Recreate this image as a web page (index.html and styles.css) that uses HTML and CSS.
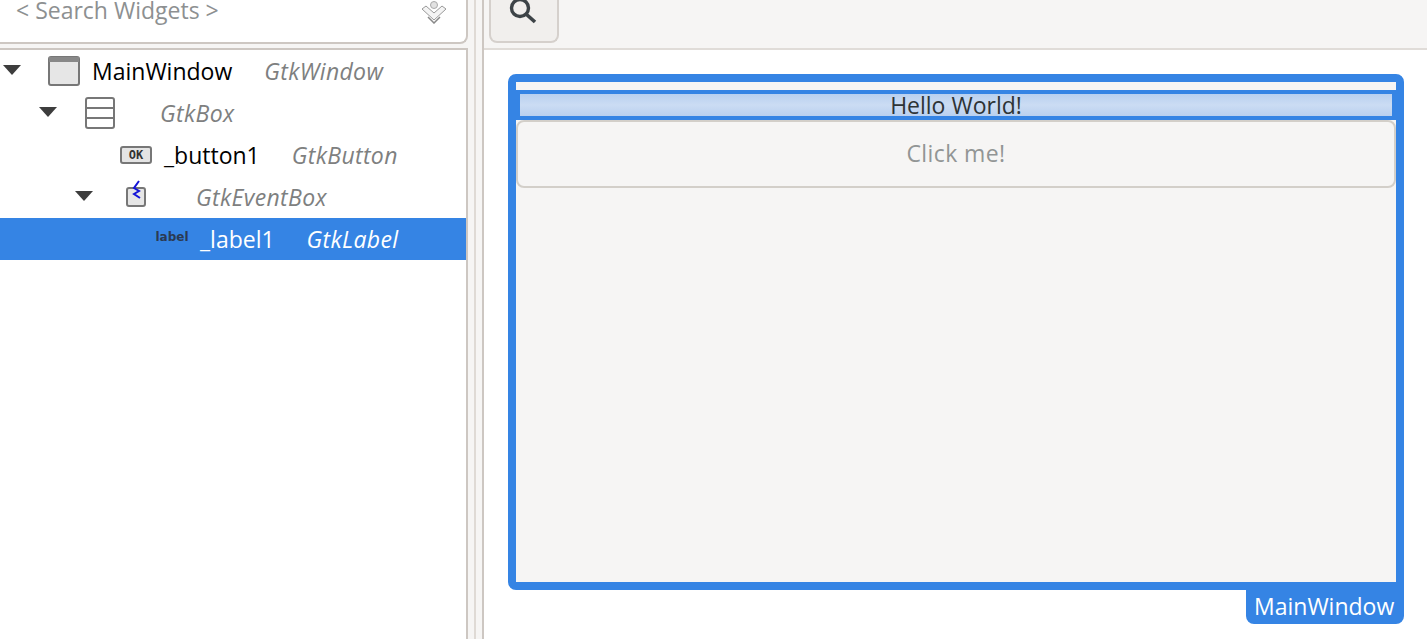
FILE: index.html
```html
<!DOCTYPE html>
<html lang="en">
<head>
   <meta charset="UTF-8">
   <meta name="viewport" content="width=device-width, initial-scale=1.0">
   <title>Glade</title>
   <link rel="stylesheet" href="styles.css">
</head>
<body>
    <div class="app">
        <!-- Widget tree -->
        <aside class="sidebar">
            <div class="search-entry">
                <span class="search-text">&lt; Search Widgets &gt;</span>
                <svg class="search-icon" width="28" height="24" viewBox="0 0 28 24">
                    <circle cx="14" cy="5" r="3.5" fill="#e2e2e2" stroke="#aaa"/>
                    <path d="M2 9 L14 20 L26 9 L22 6 L14 13 L6 6 Z" fill="#f4f4f4" stroke="#999"/>
                    <path d="M8 17 L14 23 L20 17" fill="none" stroke="#888" stroke-width="1.5"/>
                </svg>
            </div>
            <ul class="tree">
                <li class="row level-0">
                    <span class="arrow"></span>
                    <span class="icon">
                        <svg width="32" height="30" viewBox="0 0 32 30">
                            <rect x="1" y="1" width="30" height="28" rx="2" fill="#e6e6e6" stroke="#777" stroke-width="2"/>
                            <rect x="1" y="1" width="30" height="5" fill="#888"/>
                        </svg>
                    </span>
                    <span class="name">MainWindow</span>
                    <span class="type">GtkWindow</span>
                </li>
                <li class="row level-1">
                    <span class="arrow"></span>
                    <span class="icon">
                        <svg width="30" height="32" viewBox="0 0 30 32">
                            <rect x="1" y="1" width="28" height="30" rx="2" fill="#fff" stroke="#777" stroke-width="2"/>
                            <path d="M1 11 H29 M1 21 H29" stroke="#777" stroke-width="2"/>
                        </svg>
                    </span>
                    <span class="name"></span>
                    <span class="type">GtkBox</span>
                </li>
                <li class="row level-2">
                    <span class="arrow-space"></span>
                    <span class="icon">
                        <span class="ok-icon">OK</span>
                    </span>
                    <span class="name">_button1</span>
                    <span class="type">GtkButton</span>
                </li>
                <li class="row level-2">
                    <span class="arrow"></span>
                    <span class="icon">
                        <svg class="event-icon" width="24" height="28" viewBox="0 0 24 28">
                            <rect x="3" y="8" width="18" height="18" rx="2" fill="#e6e6e6" stroke="#777" stroke-width="2"/>
                            <path d="M15 1 L10 8 L15 11 L10 14 L16 18" fill="none" stroke="#1414d8" stroke-width="2"/>
                        </svg>
                    </span>
                    <span class="name"></span>
                    <span class="type">GtkEventBox</span>
                </li>
                <li class="row level-3 selected">
                    <span class="arrow-space"></span>
                    <span class="icon">
                        <span class="label-icon">label</span>
                    </span>
                    <span class="name">_label1</span>
                    <span class="type">GtkLabel</span>
                </li>
            </ul>
        </aside>

        <div class="divider"></div>

        <!-- Design area -->
        <main class="workspace">
            <div class="toolbar">
                <button class="tool-button">
                    <svg width="32" height="32" viewBox="0 0 32 32">
                        <circle cx="14" cy="12" r="8.5" fill="none" stroke="#3d4347" stroke-width="3.4"/>
                        <path d="M20 18 L29 26" stroke="#3d4347" stroke-width="3.6"/>
                    </svg>
                </button>
            </div>
            <div class="canvas">
                <div class="window-frame">
                    <div class="window">
                        <div class="window-top"></div>
                        <div class="label-selected">
                            <div class="label-widget">Hello World!</div>
                        </div>
                        <div class="click-button">Click me!</div>
                    </div>
                    <div class="window-tag">MainWindow</div>
                </div>
            </div>
        </main>
    </div>
</body>
</html>
```

FILE: styles.css
```css
* {
    margin: 0;
    padding: 0;
    box-sizing: border-box;
}

body {
    font-family: "Open Sans", "Noto Sans", sans-serif;
    font-size: 23px;
    background-color: #f6f5f4;
    overflow: hidden;
}

.app {
    display: flex;
    height: 639px;
}

/* Left side */
.sidebar {
    width: 468px;
    display: flex;
    flex-direction: column;
}

.search-entry {
    height: 44px;
    background-color: #ffffff;
    border-right: 2px solid #cdc7c2;
    border-bottom: 2px solid #cdc7c2;
    border-bottom-right-radius: 8px;
    display: flex;
    justify-content: space-between;
    padding: 0 18px 0 16px;
}

.search-text {
    color: #8d9091;
    line-height: 20px;
}

.tree {
    list-style-type: none;
    margin-top: 4px;
    flex: 1;
    background-color: #ffffff;
    border-top: 2px solid #cdc7c2;
    border-right: 2px solid #cdc7c2;
}

.row {
    display: flex;
    align-items: center;
    height: 42px;
    color: #000000;
}

.level-1 { padding-left: 36px; }
.level-2 { padding-left: 72px; }
.level-3 { padding-left: 108px; }

.arrow, .arrow-space {
    width: 44px;
    flex-shrink: 0;
}

.arrow::before {
    content: "";
    display: block;
    width: 0;
    height: 0;
    margin: 0 0 2px 3px;
    border-left: 9.5px solid transparent;
    border-right: 9.5px solid transparent;
    border-top: 10px solid #3d3d3d;
}

.icon {
    width: 40px;
    flex-shrink: 0;
    display: flex;
    justify-content: center;
    align-items: center;
}

.ok-icon {
    width: 32px;
    height: 18px;
    margin-bottom: 1px;
    background-color: #e4e4e4;
    border: 2px solid #777777;
    border-radius: 3px;
    font-family: "DejaVu Sans Mono", monospace;
    font-size: 12px;
    line-height: 14px;
    font-weight: bold;
    text-align: center;
    color: #333333;
}

.event-icon {
    margin-bottom: 6px;
}

.label-icon {
    margin-bottom: 4px;
    font-family: "DejaVu Sans", sans-serif;
    font-size: 12px;
    font-weight: bold;
    color: #2b3a52;
}

.name {
    margin-left: 8px;
    margin-right: 32px;
    white-space: nowrap;
}

.type {
    font-style: italic;
    letter-spacing: 0.35px;
    color: #7e8080;
    white-space: nowrap;
}

.selected {
    background-color: #3584e4;
    color: #ffffff;
}

.selected .type {
    color: #ffffff;
}

.divider {
    width: 16px;
    background-color: #f6f5f4;
    background-image: linear-gradient(#dfdad5, #dfdad5);
    background-size: 2px 100%;
    background-position: 6px 0;
    background-repeat: no-repeat;
    border-right: 2px solid #cdc7c2;
}

/* Right side */
.workspace {
    flex: 1;
    display: flex;
    flex-direction: column;
    background-color: #ffffff;
}

.toolbar {
    height: 50px;
    flex-shrink: 0;
    background-color: #f6f5f4;
    border-bottom: 2px solid #e0dcd8;
    padding-left: 5px;
}

.tool-button {
    display: flex;
    align-items: flex-start;
    width: 70px;
    height: 43px;
    background-color: #f1efed;
    border: 2px solid #d5d0cc;
    border-top: none;
    border-radius: 0 0 8px 8px;
    padding-left: 15px;
}

.tool-button svg {
    margin-top: -4px;
}

.canvas {
    padding: 24px 23px 0 24px;
}

.window-frame {
    display: flex;
    flex-direction: column;
    align-items: flex-end;
}

.window {
    width: 100%;
    height: 516px;
    border: 8px solid #3584e4;
    border-radius: 8px 8px 0 8px;
    background-color: #f6f5f4;
}

.window-top {
    height: 8px;
}

.label-selected {
    height: 30px;
    padding: 4px;
    background-color: #3584e4;
}

.label-widget {
    height: 22px;
    line-height: 22px;
    text-align: center;
    color: #2e3436;
    background-color: #bdd3f0;
    background-image: linear-gradient(#b9d0ef, #cbdcf3 50%, #b9d0ef);
}

.click-button {
    height: 68px;
    line-height: 62px;
    letter-spacing: 0.4px;
    text-align: center;
    color: #929595;
    background-color: #f6f5f4;
    border: 2px solid #d3cfc9;
    border-radius: 8px;
}

.window-tag {
    width: 158px;
    height: 34px;
    line-height: 32px;
    padding-left: 8px;
    color: #ffffff;
    background-color: #3584e4;
    border-radius: 0 0 8px 8px;
    white-space: nowrap;
}
```
